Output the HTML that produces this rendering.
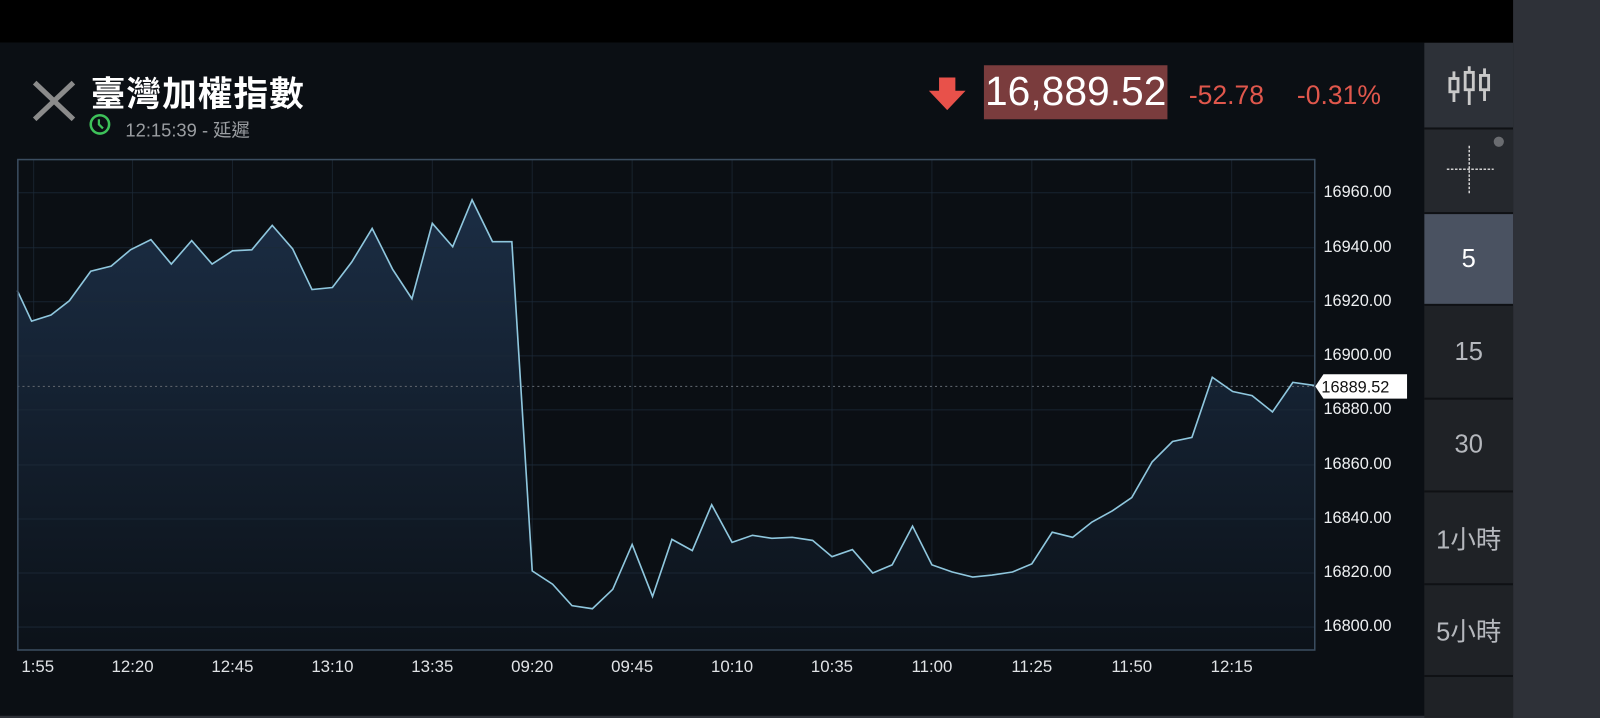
<!DOCTYPE html>
<html><head><meta charset="utf-8"><style>
html,body{margin:0;padding:0;width:1600px;height:686px;overflow:hidden;background:#2e3138;}
#w{position:absolute;left:0;top:0;width:1569px;height:700px;transform:scale(1.0196);transform-origin:0 0;font-family:"Liberation Sans","Noto Sans CJK TC",sans-serif;}
.a{position:absolute;}
.btn{position:absolute;left:1397px;width:87px;display:flex;align-items:center;justify-content:center;color:#b5b8bd;font-size:25px;}
.yl{position:absolute;left:1298px;font-size:16px;color:#eef0f2;line-height:18px;}
.xl{position:absolute;top:645px;font-size:16.5px;color:#e0e3e6;width:60px;margin-left:-30px;text-align:center;}
</style></head><body><div id="w">
<div class="a" style="left:0;top:0;width:1484px;height:42px;background:#000"></div>
<div class="a" style="left:0;top:42px;width:1397px;height:660px;background:#0b0f14"></div>
<div class="a" style="left:1397px;top:42px;width:87px;height:660px;background:#0f1114"></div>
<div class="btn" style="top:42px;height:83px;background:#2d3138">
<svg width="44" height="40" viewBox="0 0 44 40"><g stroke="#c9c9c9" stroke-width="2.8" fill="none"><line x1="7" y1="6" x2="7" y2="36"/><rect x="3" y="13" width="8" height="13" fill="#2d3138"/><line x1="22" y1="1" x2="22" y2="39"/><rect x="18" y="7" width="8" height="17" fill="#2d3138"/><line x1="37" y1="3" x2="37" y2="35"/><rect x="33" y="10" width="8" height="14" fill="#2d3138"/></g></svg></div>
<div class="btn" style="top:127px;height:81px;background:#25282d">
<svg width="87" height="81" viewBox="0 0 87 81" style="position:absolute;left:0;top:0"><circle cx="73" cy="12" r="5" fill="#6a6c70"/><g stroke="#d0d0d0" stroke-width="1.5" stroke-dasharray="2.5 1.5"><line x1="22" y1="39" x2="68" y2="39"/><line x1="44" y1="16" x2="44" y2="64"/></g></svg></div>
<div class="btn" style="top:210px;height:88px;background:#4a5261;color:#fff">5</div>
<div class="btn" style="top:300px;height:90px;background:#1f2226">15</div>
<div class="btn" style="top:392px;height:89px;background:#1f2226">30</div>
<div class="btn" style="top:483px;height:89px;background:#1f2226">1小時</div>
<div class="btn" style="top:574px;height:88px;background:#1f2226">5小時</div>
<div class="btn" style="top:664px;height:40px;background:#1f2226"></div>

<svg class="a" style="left:30px;top:78px" width="46" height="42"><g stroke="#8b8b8b" stroke-width="5"><line x1="4" y1="3" x2="42" y2="39"/><line x1="42" y1="3" x2="4" y2="39"/></g></svg>
<div class="a" style="left:89px;top:65px;font-size:34px;font-weight:bold;color:#fff;letter-spacing:1px">臺灣加權指數</div>
<svg class="a" style="left:87px;top:111px" width="22" height="22"><circle cx="11" cy="11" r="9" stroke="#3ec25a" stroke-width="2.5" fill="none"/><path d="M10 6v5l4 4" stroke="#3ec25a" stroke-width="2.2" fill="none"/></svg>
<div class="a" style="left:123px;top:114px;font-size:18px;color:#9b9ea2">12:15:39 - 延遲</div>
<svg class="a" style="left:911px;top:76px" width="36" height="32"><path d="M10 0h16v13h10L18 32 0 13h10z" fill="#e8514a"/></svg>
<div class="a" style="left:965px;top:64px;width:180px;height:53px;background:#7a3c3d;color:#fff;font-size:40px;line-height:53px;text-align:center">16,889.52</div>
<div class="a" style="left:1166px;top:78px;font-size:26px;color:#e0574c">-52.78</div>
<div class="a" style="left:1272px;top:78px;font-size:26px;color:#e0574c">-0.31%</div>

<svg class="a" style="left:0;top:0" width="1400" height="673">
<defs><linearGradient id="g" x1="0" y1="0" x2="0" y2="1"><stop offset="0" stop-color="#1b2d44"/><stop offset="1" stop-color="#0c1219"/></linearGradient></defs>
<g stroke="#18222d" stroke-width="1">
<line x1="33" y1="157" x2="33" y2="637"/><line x1="130" y1="157" x2="130" y2="637"/><line x1="228" y1="157" x2="228" y2="637"/><line x1="326" y1="157" x2="326" y2="637"/><line x1="424" y1="157" x2="424" y2="637"/><line x1="522" y1="157" x2="522" y2="637"/><line x1="620" y1="157" x2="620" y2="637"/><line x1="718" y1="157" x2="718" y2="637"/><line x1="816" y1="157" x2="816" y2="637"/><line x1="914" y1="157" x2="914" y2="637"/><line x1="1012" y1="157" x2="1012" y2="637"/><line x1="1110" y1="157" x2="1110" y2="637"/><line x1="1208" y1="157" x2="1208" y2="637"/>
</g>
<path d="M17,285 L31,315 L50,309 L68,295 L89,266 L109,261 L128,245 L148,235 L168,259 L188,236 L208,259 L228,246 L247,245 L267,221 L287,244 L306,284 L326,282 L345,257 L365,224 L385,264 L404,293 L424,219 L444,242 L463,196 L483,237 L502,237 L522,560 L542,573 L561,594 L581,597 L601,578 L620,534 L640,585 L659,529 L679,540 L698,495 L718,532 L738,525 L757,528 L777,527 L797,530 L816,546 L836,539 L856,562 L875,554 L895,516 L914,554 L934,561 L954,566 L973,564 L993,561 L1012,553 L1032,522 L1052,527 L1071,512 L1091,501 L1110,488 L1130,453 L1150,433 L1169,429 L1189,370 L1209,384 L1228,388 L1248,404 L1268,375 L1289,378 L1289,637 L17,637Z" fill="url(#g)"/>
<g stroke="#1c2a38" stroke-width="1" opacity="0.8">
<line x1="17" y1="189" x2="1289" y2="189"/><line x1="17" y1="243" x2="1289" y2="243"/><line x1="17" y1="296" x2="1289" y2="296"/><line x1="17" y1="349" x2="1289" y2="349"/><line x1="17" y1="402" x2="1289" y2="402"/><line x1="17" y1="456" x2="1289" y2="456"/><line x1="17" y1="509" x2="1289" y2="509"/><line x1="17" y1="562" x2="1289" y2="562"/><line x1="17" y1="615" x2="1289" y2="615"/>
</g>
<line x1="17" y1="379" x2="1289" y2="379" stroke="#5a6068" stroke-dasharray="2 3"/>
<path d="M17,285 L31,315 L50,309 L68,295 L89,266 L109,261 L128,245 L148,235 L168,259 L188,236 L208,259 L228,246 L247,245 L267,221 L287,244 L306,284 L326,282 L345,257 L365,224 L385,264 L404,293 L424,219 L444,242 L463,196 L483,237 L502,237 L522,560 L542,573 L561,594 L581,597 L601,578 L620,534 L640,585 L659,529 L679,540 L698,495 L718,532 L738,525 L757,528 L777,527 L797,530 L816,546 L836,539 L856,562 L875,554 L895,516 L914,554 L934,561 L954,566 L973,564 L993,561 L1012,553 L1032,522 L1052,527 L1071,512 L1091,501 L1110,488 L1130,453 L1150,433 L1169,429 L1189,370 L1209,384 L1228,388 L1248,404 L1268,375 L1289,378" fill="none" stroke="#8fc7de" stroke-width="1.6"/>
<rect x="17.5" y="156.5" width="1272" height="481" fill="none" stroke="#3b4d60" stroke-width="1.5"/>
<path d="M1290,379 L1298,367 L1380,367 L1380,391 L1298,391Z" fill="#fff"/>
<text x="1296" y="385" font-family="Liberation Sans" font-size="16" fill="#111">16889.52</text>
</svg>
<div class="yl" style="top:180px">16960.00</div>
<div class="yl" style="top:234px">16940.00</div>
<div class="yl" style="top:287px">16920.00</div>
<div class="yl" style="top:340px">16900.00</div>
<div class="yl" style="top:393px">16880.00</div>
<div class="yl" style="top:447px">16860.00</div>
<div class="yl" style="top:500px">16840.00</div>
<div class="yl" style="top:553px">16820.00</div>
<div class="yl" style="top:606px">16800.00</div>
<div class="xl" style="left:37px">1:55</div>
<div class="xl" style="left:130px">12:20</div>
<div class="xl" style="left:228px">12:45</div>
<div class="xl" style="left:326px">13:10</div>
<div class="xl" style="left:424px">13:35</div>
<div class="xl" style="left:522px">09:20</div>
<div class="xl" style="left:620px">09:45</div>
<div class="xl" style="left:718px">10:10</div>
<div class="xl" style="left:816px">10:35</div>
<div class="xl" style="left:914px">11:00</div>
<div class="xl" style="left:1012px">11:25</div>
<div class="xl" style="left:1110px">11:50</div>
<div class="xl" style="left:1208px">12:15</div>
</div></body></html>
